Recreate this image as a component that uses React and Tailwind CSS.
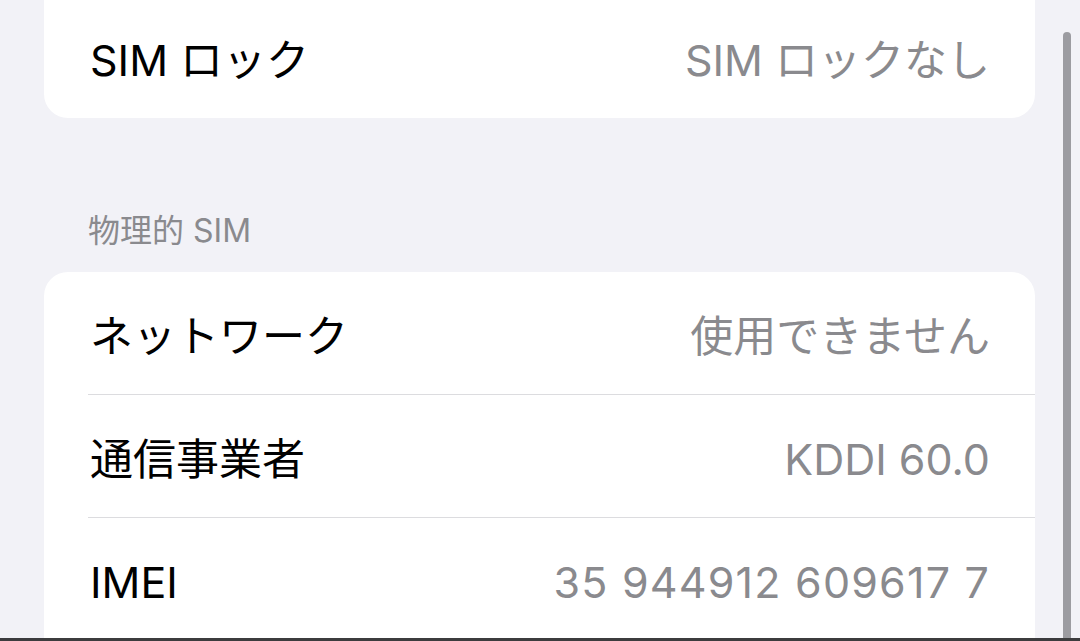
import React from 'react';

const font = 'font-["Inter","Noto_Sans_CJK_JP",sans-serif]';

const Row = ({ label, value, last, wide }) => (
  <div className="flex flex-col">
    <div className="h-[122px] flex items-center justify-between pl-[46px] pr-[45px]">
      <span className="text-[43px] text-black pt-[6px]">{label}</span>
      <span className={`text-[43px] text-[#8a8a8e] pt-[6px] ${wide ? 'tracking-[1.2px]' : ''}`}>{value}</span>
    </div>
    {!last && <div className="ml-[44px] h-px bg-[#dcdcdf]" />}
  </div>
);

const App = () => {
  return (
    <div className={`relative w-[1080px] h-[641px] overflow-hidden bg-[#f2f2f7] ${font}`}>
      <div className="pl-[44px] pr-[45px]">
        <div className="-mt-[4px] bg-white rounded-b-[24px]">
          <Row label="SIM ロック" value="SIM ロックなし" last />
        </div>

        <div className="mt-[93px] mb-[21px] pl-[44px] h-[40px] flex items-center text-[32px] text-[#8a8a8e]">
          物理的 SIM
        </div>

        <div className="bg-white rounded-t-[24px] pb-[40px]">
          <Row label="ネットワーク" value="使用できません" />
          <Row label="通信事業者" value="KDDI 60.0" />
          <Row label="IMEI" value="35 944912 609617 7" wide last />
        </div>
      </div>

      {/* scroll indicator */}
      <div className="absolute left-[1063px] top-[32px] w-[8px] h-[700px] rounded-full bg-[#9c9ca1]" />
      <div className="absolute left-0 right-0 bottom-0 h-[3px] bg-[#3c3c3e]" />
    </div>
  );
};

export default App;
